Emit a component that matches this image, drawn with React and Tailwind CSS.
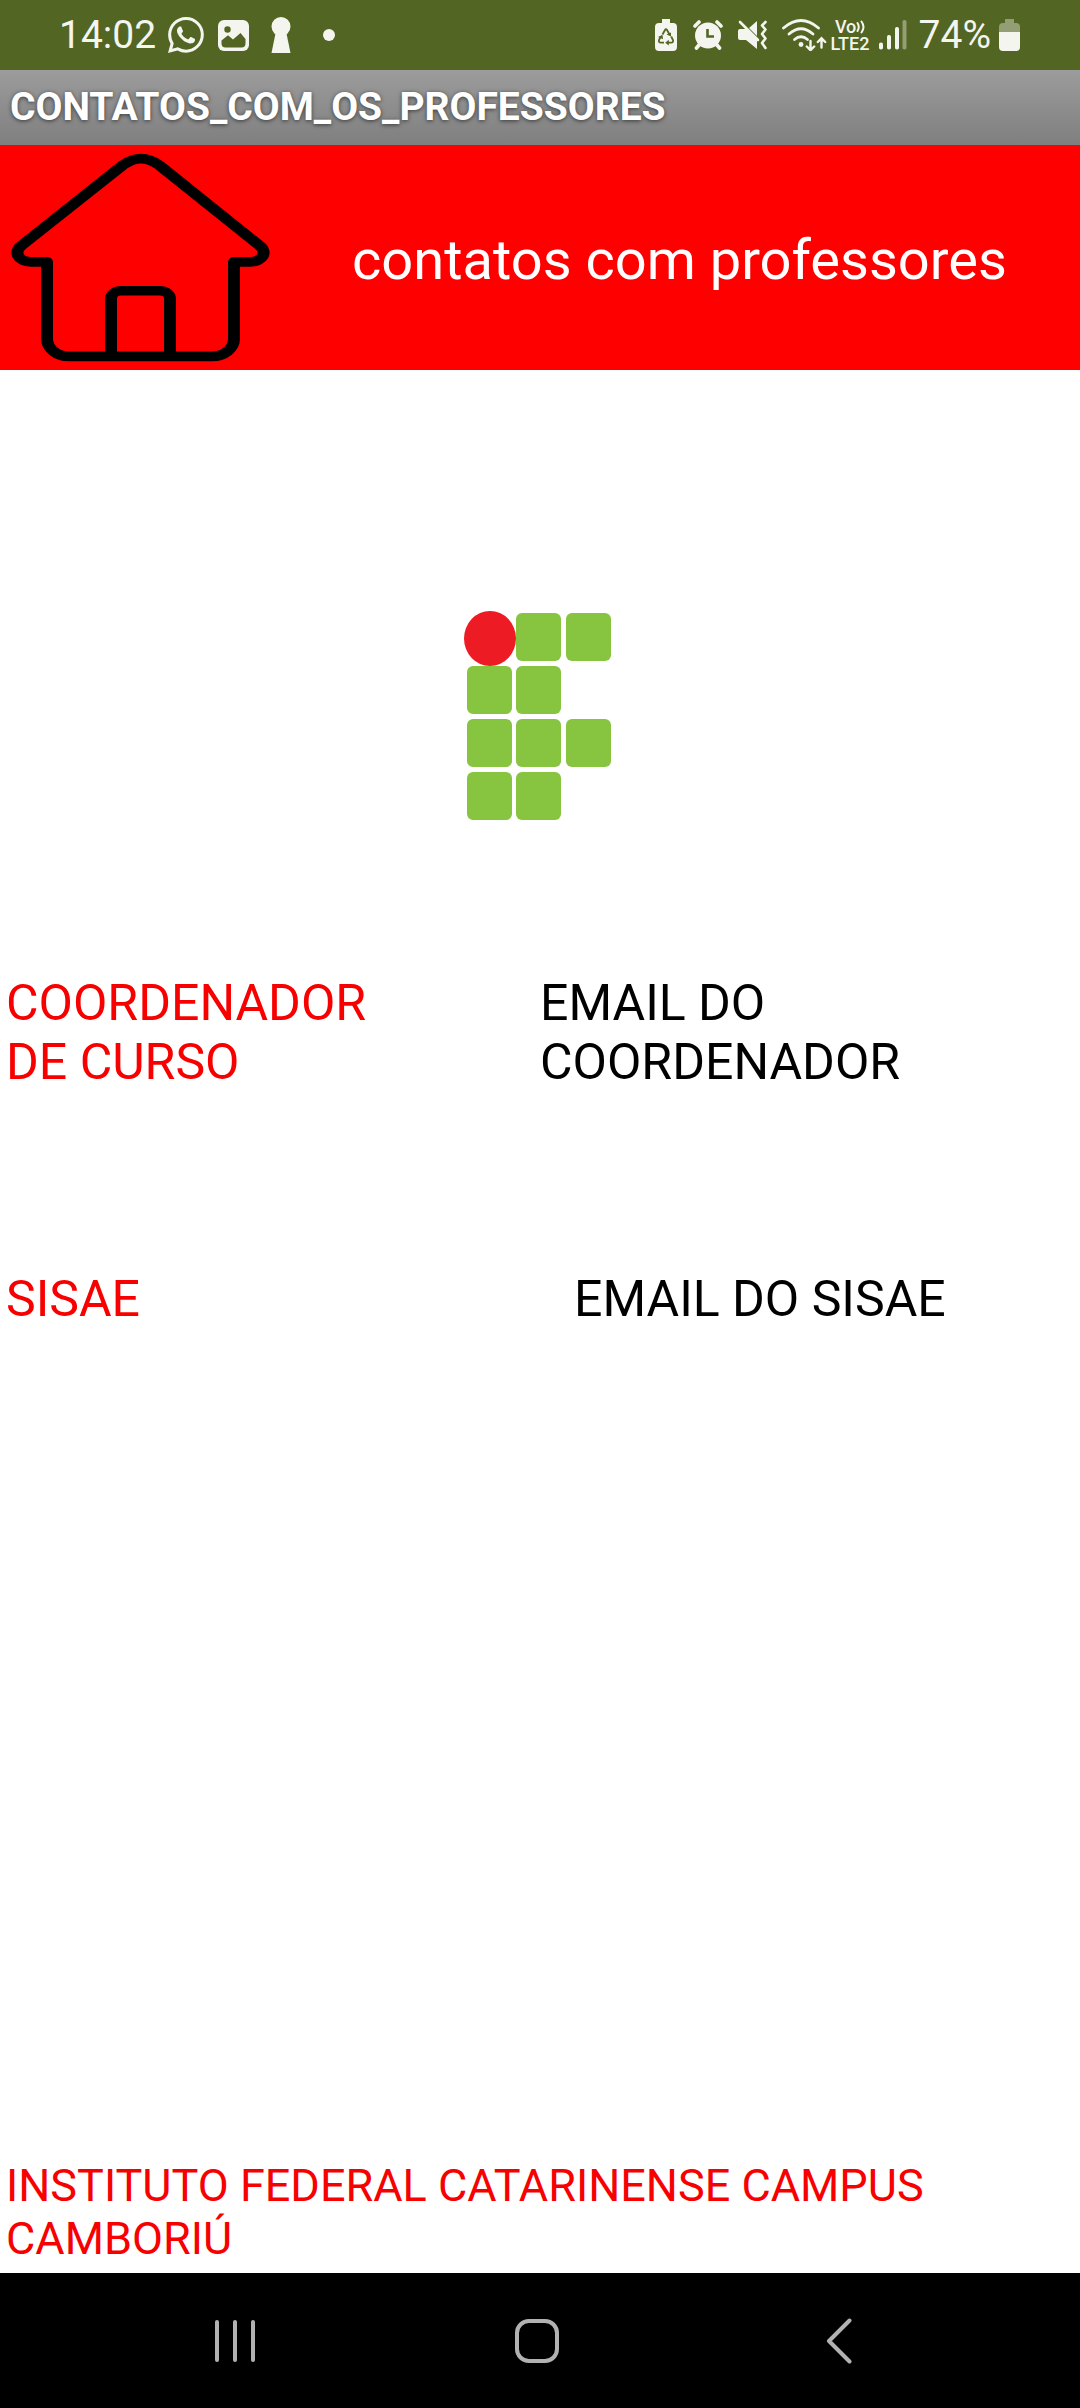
import { BsWhatsapp } from "react-icons/bs";

const logoTiles = [
  [52, 3],
  [102, 3],
  [3, 56],
  [52, 56],
  [3, 109],
  [52, 109],
  [102, 109],
  [3, 162],
  [52, 162],
];

function StatusBar() {
  return (
    <div className="flex h-[70px] items-center justify-between bg-[#526523] pr-[60px] pl-[59px] text-[#f4f5ef]">
      <div className="flex items-center">
        <span className="text-[39px] leading-[48px]">14:02</span>
        <BsWhatsapp className="ml-3 size-9" />
        <svg className="ml-3.5 h-[31px] w-[31px]" viewBox="0 0 31 31" fill="none">
          <rect width="31" height="31" rx="6" fill="#f4f5ef" />
          <circle cx="9.5" cy="9.5" r="3.2" fill="#526523" />
          <path d="M3.500 20.500l6.500-5.300 5 4.300 7.500-6.500 5 6v4.500a4 4 0 0 1-4 4h-16a4 4 0 0 1-4-4z" fill="#526523" />
        </svg>
        <svg className="ml-[22px] h-9 w-5" viewBox="0 0 20 36" fill="currentColor">
          <circle cx="10" cy="9.500" r="9.500" />
          <path d="M5 14h10l4.500 22H.5z" />
        </svg>
        <span className="ml-8 size-3 rounded-full bg-[#f4f5ef]" />
      </div>
      <div className="flex items-center">
        <svg className="h-8 w-[22px]" viewBox="0 0 22 32" fill="currentColor">
          <path d="M7 0h8v4h3a4 4 0 0 1 4 4v20a4 4 0 0 1-4 4H4a4 4 0 0 1-4-4V8a4 4 0 0 1 4-4h3z" />
          <g stroke="#526523" strokeWidth="1.800" fill="none">
            <path d="M7.500 15.500L10 11q1-1.500 2 0l2.500 4.500" />
            <path d="M5.800 17.500L4 21q-.7 2.500 2 2.700h3" />
            <path d="M16.200 17.500L18 21q.7 2.500-2 2.700h-3" />
          </g>
          <path d="M11.500 15.500l4.500-2v4zM3 18l4.500-2.200.5 4.500zM13.800 20.800v5.800l-3.600-2.900z" fill="#526523" />
        </svg>
        <svg className="ml-4 h-[30px] w-[30px]" viewBox="0 0 30 30" fill="currentColor">
          <circle cx="15" cy="15.500" r="13" />
          <g stroke="currentColor" strokeWidth="3.600" strokeLinecap="round" fill="none">
            <path d="M2 6l4-4M28 6l-4-4M6 25l-2.500 3M24 25l2.500 3" />
          </g>
          <path d="M14.500 9v7.500H21" stroke="#526523" strokeWidth="2.600" fill="none" />
        </svg>
        <svg className="ml-3.5 h-[30px] w-[31px]" viewBox="0 0 31 30" fill="currentColor">
          <path d="M3 9h7l10 10v10L9 20H3a2 2 0 0 1-2-2v-7a2 2 0 0 1 2-2z" />
          <path d="M12 8l8-7v15z" />
          <path d="M3 2l18 18" stroke="currentColor" strokeWidth="2.600" strokeLinecap="round" />
          <path d="M28.500 2L25 5.500l3.500 4-3.500 4.500 3.500 4.500-3.500 4.500 3.500 5" fill="none" stroke="currentColor" strokeWidth="2.600" strokeLinecap="round" strokeLinejoin="round" />
        </svg>
        <svg className="ml-3.5 h-8 w-[45px]" viewBox="0 0 45 32" fill="none" stroke="currentColor" strokeLinecap="round">
          <g strokeWidth="2.800">
            <path d="M1.500 9Q19-6 36.500 9" />
            <path d="M7 15Q19 4.500 31 15" />
            <path d="M12.500 20.500Q19 15 25.500 20.500" />
          </g>
          <circle cx="19" cy="25.500" r="2.400" fill="currentColor" stroke="none" />
          <path d="M28.500 22v9M24.800 27.500l3.700 3.700 3.700-3.700M39.500 28.500v-9M35.800 23l3.700-3.700L43.200 23" strokeWidth="2.400" />
        </svg>
        <div className="ml-1 flex w-10 flex-col text-[18px] leading-[17px] font-medium">
          <span className="flex items-center justify-center">
            Vo
            <svg className="h-3.5 w-2.5" viewBox="0 0 10 14" fill="none" stroke="currentColor" strokeWidth="2" strokeLinecap="round">
              <path d="M1.500 3q2.500 4 0 8M5.500 1.500q4 5.500 0 11" />
            </svg>
          </span>
          <span>LTE2</span>
        </div>
        <svg className="ml-2 h-[30px] w-7" viewBox="0 0 28 30" fill="currentColor">
          <rect x="0" y="22.500" width="4" height="7" rx="1.800" />
          <rect x="8" y="15" width="4" height="14.500" rx="1.800" />
          <rect x="16" y="7" width="4" height="22.500" rx="1.800" />
          <rect x="23.500" y="0" width="4" height="29.500" rx="1.800" opacity=".4" />
        </svg>
        <span className="ml-3 text-[39px] leading-[48px]">74%</span>
        <svg className="ml-2 h-8 w-[21px]" viewBox="0 0 21 32" fill="currentColor">
          <path d="M6 0h9v4h2a4 4 0 0 1 4 4v5H0V8a4 4 0 0 1 4-4h2z" opacity=".4" />
          <path d="M0 13h21v15a4 4 0 0 1-4 4H4a4 4 0 0 1-4-4z" />
        </svg>
      </div>
    </div>
  );
}

function Header() {
  return (
    <header className="flex items-center bg-[#ff0000]">
      <button type="button" aria-label="Início" className="shrink-0">
        <svg
          className="h-[225px] w-[281px]"
          viewBox="0 0 281 281"
          preserveAspectRatio="none"
          fill="none"
          stroke="#000"
          strokeWidth="12"
          strokeLinejoin="round"
        >
          <path d="M123 25Q141 9 159 25L259 125C268 133 263 146 250 146H234V242A22 22 0 0 1 212 264H69A22 22 0 0 1 47 242V146H31C18 146 13 133 22 125Z" />
          <path d="M111 264V192A10 10 0 0 1 121 182H160A10 10 0 0 1 170 192V264" />
        </svg>
      </button>
      <h1 className="ml-[71px] pt-1 text-[56px] leading-[66px] text-white">contatos com professores</h1>
    </header>
  );
}

function Logo() {
  return (
    <svg className="h-[210px] w-[152px]" viewBox="0 0 152 210" role="img" aria-label="Instituto Federal">
      {logoTiles.map(([x, y]) => (
        <rect key={`${x}-${y}`} x={x} y={y} width="45" height="48" rx="6" fill="#87c440" />
      ))}
      <ellipse cx="26" cy="28.500" rx="26" ry="27.500" fill="#ed1c24" />
    </svg>
  );
}

function NavBar() {
  return (
    <nav className="flex h-[135px] bg-black pr-[90px] pl-[84px] text-[#b2b2b2]">
      <button type="button" aria-label="Recentes" className="flex flex-1 items-center justify-center">
        <svg className="h-11 w-[42px]" viewBox="0 0 42 44" stroke="currentColor" strokeWidth="4" strokeLinecap="round">
          <path d="M3 3v38M21 3v38M39 3v38" />
        </svg>
      </button>
      <button type="button" aria-label="Tela inicial" className="flex flex-1 items-center justify-center">
        <svg className="h-11 w-11" viewBox="0 0 44 44" fill="none" stroke="currentColor" strokeWidth="4">
          <rect x="2" y="2" width="40" height="40" rx="12" />
        </svg>
      </button>
      <button type="button" aria-label="Voltar" className="flex flex-1 items-center justify-center">
        <svg className="h-[46px] w-[26px]" viewBox="0 0 26 46" fill="none" stroke="currentColor" strokeWidth="4" strokeLinecap="round" strokeLinejoin="round">
          <path d="M23.500 2.500L3 23l20.500 20.500" />
        </svg>
      </button>
    </nav>
  );
}

export default function App() {
  return (
    <div className="flex min-h-screen flex-col bg-white font-[Roboto,sans-serif]">
      <StatusBar />
      <div className="bg-linear-to-b from-[#9c9c9c] to-[#7f7f7f] px-2.5 py-3.5 text-[39px] leading-[47px] font-bold text-white text-shadow-[0_1px_4px_rgb(0_0_0/0.6)]">
        CONTATOS_COM_OS_PROFESSORES
      </div>
      <Header />
      <main className="flex flex-1 flex-col">
        <div className="flex justify-center pt-60">
          <Logo />
        </div>
        <section className="mt-[154px] grid grid-cols-2 text-[50px] leading-[59px]">
          <p className="pr-32 pl-1.5 text-[#f80000]">COORDENADOR DE CURSO</p>
          <p>EMAIL DO COORDENADOR</p>
        </section>
        <section className="mt-[178px] grid grid-cols-2 text-[50px] leading-[59px]">
          <p className="pl-1.5 text-[#f80000]">SISAE</p>
          <p className="pl-[34px]">EMAIL DO SISAE</p>
        </section>
        <footer className="mt-auto px-1.5 pb-2 text-[45px] leading-[53px] text-[#f80000]">
          INSTITUTO FEDERAL CATARINENSE CAMPUS CAMBORIÚ
        </footer>
      </main>
      <NavBar />
    </div>
  );
}
